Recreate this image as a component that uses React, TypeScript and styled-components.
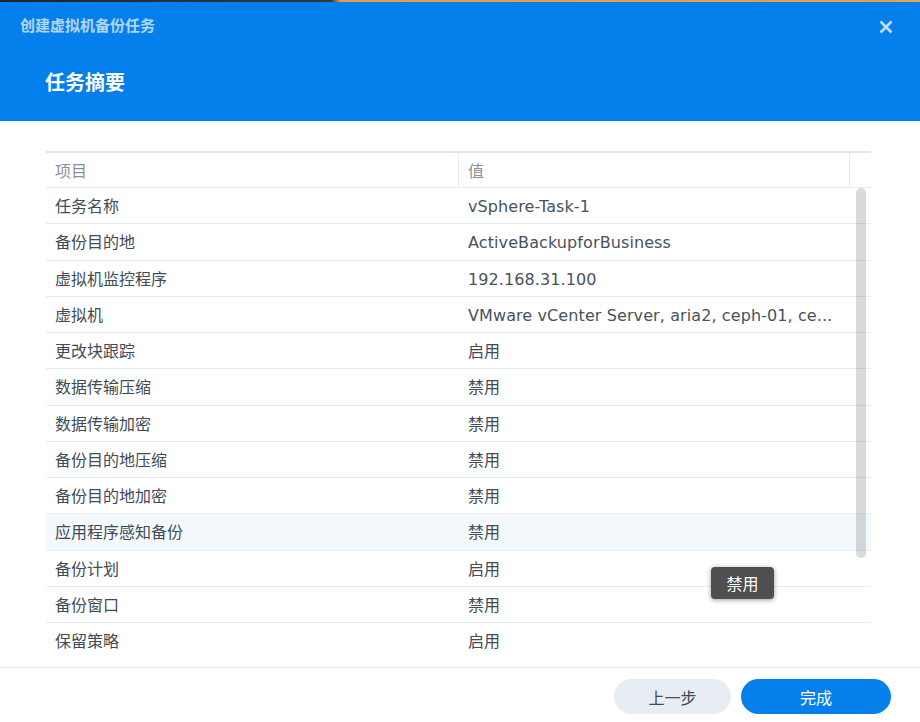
import styled, { createGlobalStyle } from "styled-components"

const GlobalStyle = createGlobalStyle`
  html, body {
    margin: 0;
    padding: 0;
    background: #fff;
  }
  body {
    font-family: "DejaVu Sans", "Noto Sans CJK SC", sans-serif;
  }
`

const Page = styled.div`
  position: relative;
  display: flex;
  flex-direction: column;
  width: 920px;
  height: 722px;
  overflow: hidden;
  background: #fff;
`

const Wallpaper = styled.div`
  height: 2px;
  flex: none;
  background: linear-gradient(90deg, #1a2530 0%, #2c3a48 36%, #e0a050 37%, #dca552 100%);
`

const Header = styled.header`
  flex: none;
  height: 119px;
  padding: 0 20px 0 20px;
  box-sizing: border-box;
  background: #057feb;
`

const TitleBar = styled.div`
  display: flex;
  align-items: center;
  justify-content: space-between;
  height: 50px;
`

const DialogTitle = styled.div`
  margin-bottom: 4px;
  font-family: "Noto Sans CJK SC", sans-serif;
  font-size: 15px;
  line-height: 20px;
  font-weight: 700;
  color: rgba(255, 255, 255, 0.7);
`

const CloseButton = styled.button`
  display: flex;
  padding: 0;
  margin-right: 7px;
  border: 0;
  background: none;
  color: rgba(255, 255, 255, 0.75);
`

const StepTitle = styled.h1`
  margin: 16px 0 0 25px;
  font-family: "Noto Sans CJK SC", sans-serif;
  font-size: 20px;
  line-height: 28px;
  font-weight: 700;
  color: #fff;
`

const Body = styled.main`
  flex: 1;
  min-height: 0;
  padding: 30px 49px 0 46px;
`

const Table = styled.div`
  position: relative;
  height: 516px;
  overflow: hidden;
  border-top: 2px solid #dfe5ec;
`

const Columns = styled.div`
  display: grid;
  grid-template-columns: 413px 391px 21px;
  height: 34px;
  border-bottom: 1px solid #e6ecf2;
`

const ColumnTitle = styled.div`
  display: flex;
  align-items: center;
  padding-left: 9px;
  font-size: 16px;
  color: #8a8f96;
  border-right: 1px solid #e6ecf2;

  &:last-child {
    border-right: 0;
  }
`

const RowList = styled.div`
  display: flex;
  flex-direction: column;
`

const Row = styled.div<{ $hover?: boolean }>`
  display: grid;
  grid-template-columns: 413px 1fr;
  align-items: center;
  height: 36.25px;
  box-sizing: border-box;
  border-bottom: 1px solid #e6ecf2;
  background: ${(p) => (p.$hover ? "#f4f9fd" : "#fff")};
  font-size: 16px;
  color: #414b55;

  &:last-child {
    border-bottom-color: transparent;
  }
`

const Cell = styled.div<{ $latin?: boolean }>`
  padding: ${(p) => (p.$latin ? "2px 0 0 9px" : "0 0 1px 9px")};
  letter-spacing: ${(p) => (p.$latin ? "0.1px" : "0")};
  color: ${(p) => (p.$latin ? "#48525c" : "#414b55")};
  min-width: 0;
  white-space: nowrap;
`

const Scrollbar = styled.div`
  position: absolute;
  top: 35px;
  right: 5px;
  width: 10px;
  height: 370px;
  border-radius: 5px;
  background: rgba(60, 70, 75, 0.2);
`

const Tooltip = styled.div`
  position: absolute;
  left: 711px;
  top: 567px;
  width: 63px;
  height: 32px;
  display: flex;
  align-items: center;
  justify-content: center;
  border-radius: 4px;
  background: #4f4f4f;
  box-shadow: 0 1px 5px rgba(0, 0, 0, 0.4);
  font-size: 16px;
  color: #fff;
`

const Footer = styled.footer`
  flex: none;
  display: flex;
  justify-content: flex-end;
  gap: 10px;
  height: 55px;
  padding: 11px 29px 0 0;
  box-sizing: border-box;
  border-top: 1px solid #e3e8ef;
`

const Button = styled.button<{ $primary?: boolean }>`
  width: ${(p) => (p.$primary ? "150px" : "117px")};
  height: 35px;
  border: 0;
  border-radius: 18px;
  font-family: "DejaVu Sans", "Noto Sans CJK SC", sans-serif;
  font-size: 16px;
  background: ${(p) => (p.$primary ? "#057feb" : "#e8edf4")};
  color: ${(p) => (p.$primary ? "#fff" : "#414b55")};
`

const rows: [string, string, boolean?][] = [
  ["任务名称", "vSphere-Task-1", true],
  ["备份目的地", "ActiveBackupforBusiness", true],
  ["虚拟机监控程序", "192.168.31.100", true],
  ["虚拟机", "VMware vCenter Server, aria2, ceph-01, ce...", true],
  ["更改块跟踪", "启用"],
  ["数据传输压缩", "禁用"],
  ["数据传输加密", "禁用"],
  ["备份目的地压缩", "禁用"],
  ["备份目的地加密", "禁用"],
  ["应用程序感知备份", "禁用"],
  ["备份计划", "启用"],
  ["备份窗口", "禁用"],
  ["保留策略", "启用"],
]

export default function App() {
  return (
    <Page>
      <GlobalStyle />
      <Wallpaper />
      <Header>
        <TitleBar>
          <DialogTitle>创建虚拟机备份任务</DialogTitle>
          <CloseButton aria-label="关闭">
            <svg width="14" height="14" viewBox="0 0 14 14">
              <path d="M1.5 1.5l11 11M12.5 1.5l-11 11" stroke="currentColor" strokeWidth="2.6" fill="none" />
            </svg>
          </CloseButton>
        </TitleBar>
        <StepTitle>任务摘要</StepTitle>
      </Header>
      <Body>
        <Table>
          <Columns>
            <ColumnTitle>项目</ColumnTitle>
            <ColumnTitle>值</ColumnTitle>
            <ColumnTitle />
          </Columns>
          <RowList>
            {rows.map(([name, value, latin], i) => (
              <Row key={name} $hover={i === 9}>
                <Cell>{name}</Cell>
                <Cell $latin={latin}>{value}</Cell>
              </Row>
            ))}
          </RowList>
          <Scrollbar />
        </Table>
      </Body>
      <Footer>
        <Button>上一步</Button>
        <Button $primary>完成</Button>
      </Footer>
      <Tooltip>禁用</Tooltip>
    </Page>
  )
}
